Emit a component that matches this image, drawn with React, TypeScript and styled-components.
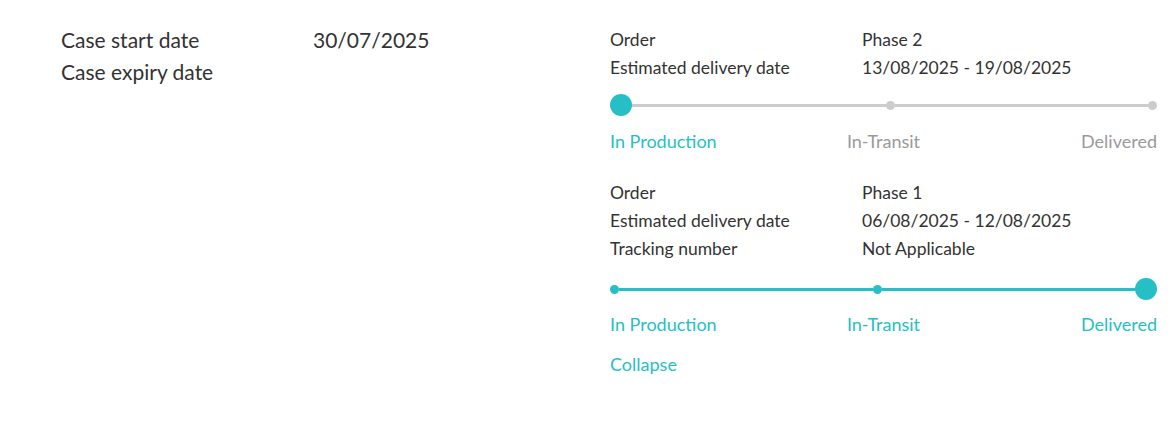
import React from "react";
import styled, { createGlobalStyle } from "styled-components";

const teal = "#26bfc5";
const grey = "#cccccc";
const greyText = "#9a9a9a";
const dark = "#333333";

const GlobalStyle = createGlobalStyle`
  html, body {
    margin: 0;
    padding: 0;
    background: #ffffff;
    font-family: Lato, "Noto Sans", "Liberation Sans", sans-serif;
    color: ${dark};
  }
`;

const Page = styled.div`
  display: flex;
  padding: 24px 19px 0 61px;
  width: 1176px;
  box-sizing: border-box;
`;

const CaseInfo = styled.div`
  width: 549px;
  flex-shrink: 0;
`;

const CaseRow = styled.div`
  display: grid;
  grid-template-columns: 252px 1fr;
  font-size: 21px;
  line-height: 32px;
`;

const Orders = styled.div`
  flex: 1;
  display: flex;
  flex-direction: column;
  padding-top: 2px;
`;

const OrderBlock = styled.section`
  & + & {
    margin-top: 24px;
  }
`;

const InfoRow = styled.div`
  display: grid;
  grid-template-columns: 252px 1fr;
  font-size: 17.5px;
  line-height: 28px;
`;

const Track = styled.div<{ $gap: number }>`
  display: flex;
  align-items: center;
  height: 22px;
  margin-top: ${(p) => p.$gap}px;
`;

const Dot = styled.span<{ $big: boolean; $done: boolean }>`
  flex-shrink: 0;
  width: ${(p) => (p.$big ? 22 : 9)}px;
  height: ${(p) => (p.$big ? 22 : 9)}px;
  border-radius: 50%;
  background: ${(p) => (p.$done ? teal : grey)};
`;

const Line = styled.span<{ $done: boolean }>`
  flex: 1;
  height: 3px;
  background: ${(p) => (p.$done ? teal : grey)};
`;

const Labels = styled.div<{ $gap: number }>`
  display: grid;
  grid-template-columns: 1fr auto 1fr;
  font-size: 18px;
  line-height: 28px;
  margin-top: ${(p) => p.$gap}px;
`;

const StageLabel = styled.span<{ $done: boolean; $align: "left" | "center" | "right" }>`
  color: ${(p) => (p.$done ? teal : greyText)};
  text-align: ${(p) => p.$align};
`;

const CollapseLink = styled.a`
  display: block;
  margin-top: 12px;
  font-size: 18px;
  line-height: 28px;
  color: ${teal};
  cursor: pointer;
  text-decoration: none;
`;

const stages = ["In Production", "In-Transit", "Delivered"];
const aligns: ("left" | "center" | "right")[] = ["left", "center", "right"];

type Order = {
  rows: [string, string][];
  current: number;
  trackGap: number;
  labelGap: number;
};

const orders: Order[] = [
  {
    rows: [
      ["Order", "Phase 2"],
      ["Estimated delivery date", "13/08/2025 - 19/08/2025"],
    ],
    current: 0,
    trackGap: 12,
    labelGap: 11,
  },
  {
    rows: [
      ["Order", "Phase 1"],
      ["Estimated delivery date", "06/08/2025 - 12/08/2025"],
      ["Tracking number", "Not Applicable"],
    ],
    current: 2,
    trackGap: 15,
    labelGap: 10,
  },
];

const Progress: React.FC<{ order: Order }> = ({ order }) => (
  <>
    <Track $gap={order.trackGap}>
      {stages.map((s, i) => (
        <React.Fragment key={s}>
          {i > 0 && <Line $done={i <= order.current} />}
          <Dot $big={i === order.current} $done={i <= order.current} />
        </React.Fragment>
      ))}
    </Track>
    <Labels $gap={order.labelGap}>
      {stages.map((s, i) => (
        <StageLabel key={s} $done={i <= order.current} $align={aligns[i]}>
          {s}
        </StageLabel>
      ))}
    </Labels>
  </>
);

export default function App() {
  return (
    <>
      <GlobalStyle />
      <Page>
        <CaseInfo>
          <CaseRow>
            <span>Case start date</span>
            <span>30/07/2025</span>
          </CaseRow>
          <CaseRow>
            <span>Case expiry date</span>
            <span></span>
          </CaseRow>
        </CaseInfo>
        <Orders>
          {orders.map((o) => (
            <OrderBlock key={o.rows[0][1]}>
              {o.rows.map(([k, v]) => (
                <InfoRow key={k}>
                  <span>{k}</span>
                  <span>{v}</span>
                </InfoRow>
              ))}
              <Progress order={o} />
            </OrderBlock>
          ))}
          <CollapseLink>Collapse</CollapseLink>
        </Orders>
      </Page>
    </>
  );
}
